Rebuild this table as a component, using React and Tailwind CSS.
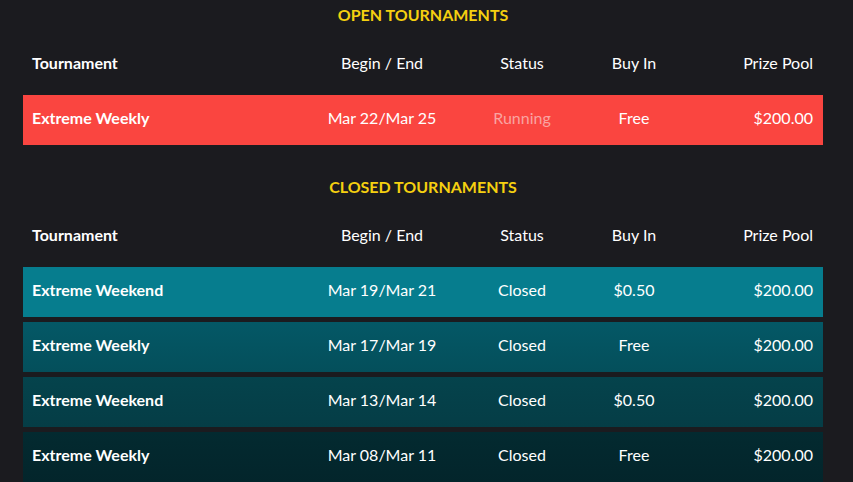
export default function App() {
  const cols = "grid grid-cols-[290px_138px_142px_82px_148px] items-center";
  const Header = () => (
    <div className={`${cols} h-[48px] text-white text-[16px]`}>
      <div className="pl-[9px] font-bold">Tournament</div>
      <div className="text-center">Begin / End</div>
      <div className="text-center">Status</div>
      <div className="text-center">Buy In</div>
      <div className="text-right pr-[10px]">Prize Pool</div>
    </div>
  );
  const Row = ({ bg, name, dates, status, statusCls = "text-white", buy, prize }) => (
    <div className={`${cols} h-[50px] pb-[4px] text-[16px] ${bg}`}>
      <div className="pl-[9px] font-bold text-white">{name}</div>
      <div className="text-center text-white">{dates}</div>
      <div className={`text-center ${statusCls}`}>{status}</div>
      <div className="text-center text-white">{buy}</div>
      <div className="text-right pr-[10px] text-white">{prize}</div>
    </div>
  );
  const Title = ({ children }) => (
    <div className="h-[30px] flex items-center justify-center text-[16px] font-bold text-[#f5d010]">
      {children}
    </div>
  );
  return (
    <div
      className="w-[853px] h-[482px] overflow-hidden bg-[#1b1b1f]"
      style={{ fontFamily: "Lato, 'Noto Sans', sans-serif" }}
    >
      <div className="w-[800px] ml-[23px]">
        <Title>OPEN TOURNAMENTS</Title>
        <div className="mt-[9px]">
          <Header />
        </div>
        <div className="mt-[8px]">
          <Row bg="bg-[#fa4540]" name="Extreme Weekly" dates="Mar 22/Mar 25" status="Running" statusCls="text-[#f9a3a1]" buy="Free" prize="$200.00" />
        </div>
        <div className="mt-[27px]">
          <Title>CLOSED TOURNAMENTS</Title>
        </div>
        <div className="mt-[9px]">
          <Header />
        </div>
        <div className="mt-[8px] flex flex-col gap-[5px]">
          <Row bg="bg-[#067d8e]" name="Extreme Weekend" dates="Mar 19/Mar 21" status="Closed" buy="$0.50" prize="$200.00" />
          <Row bg="bg-gradient-to-b from-[#045866] to-[#044f5b]" name="Extreme Weekly" dates="Mar 17/Mar 19" status="Closed" buy="Free" prize="$200.00" />
          <Row bg="bg-gradient-to-b from-[#05434c] to-[#053d46]" name="Extreme Weekend" dates="Mar 13/Mar 14" status="Closed" buy="$0.50" prize="$200.00" />
          <Row bg="bg-gradient-to-b from-[#032a30] to-[#03252b]" name="Extreme Weekly" dates="Mar 08/Mar 11" status="Closed" buy="Free" prize="$200.00" />
        </div>
      </div>
    </div>
  );
}
